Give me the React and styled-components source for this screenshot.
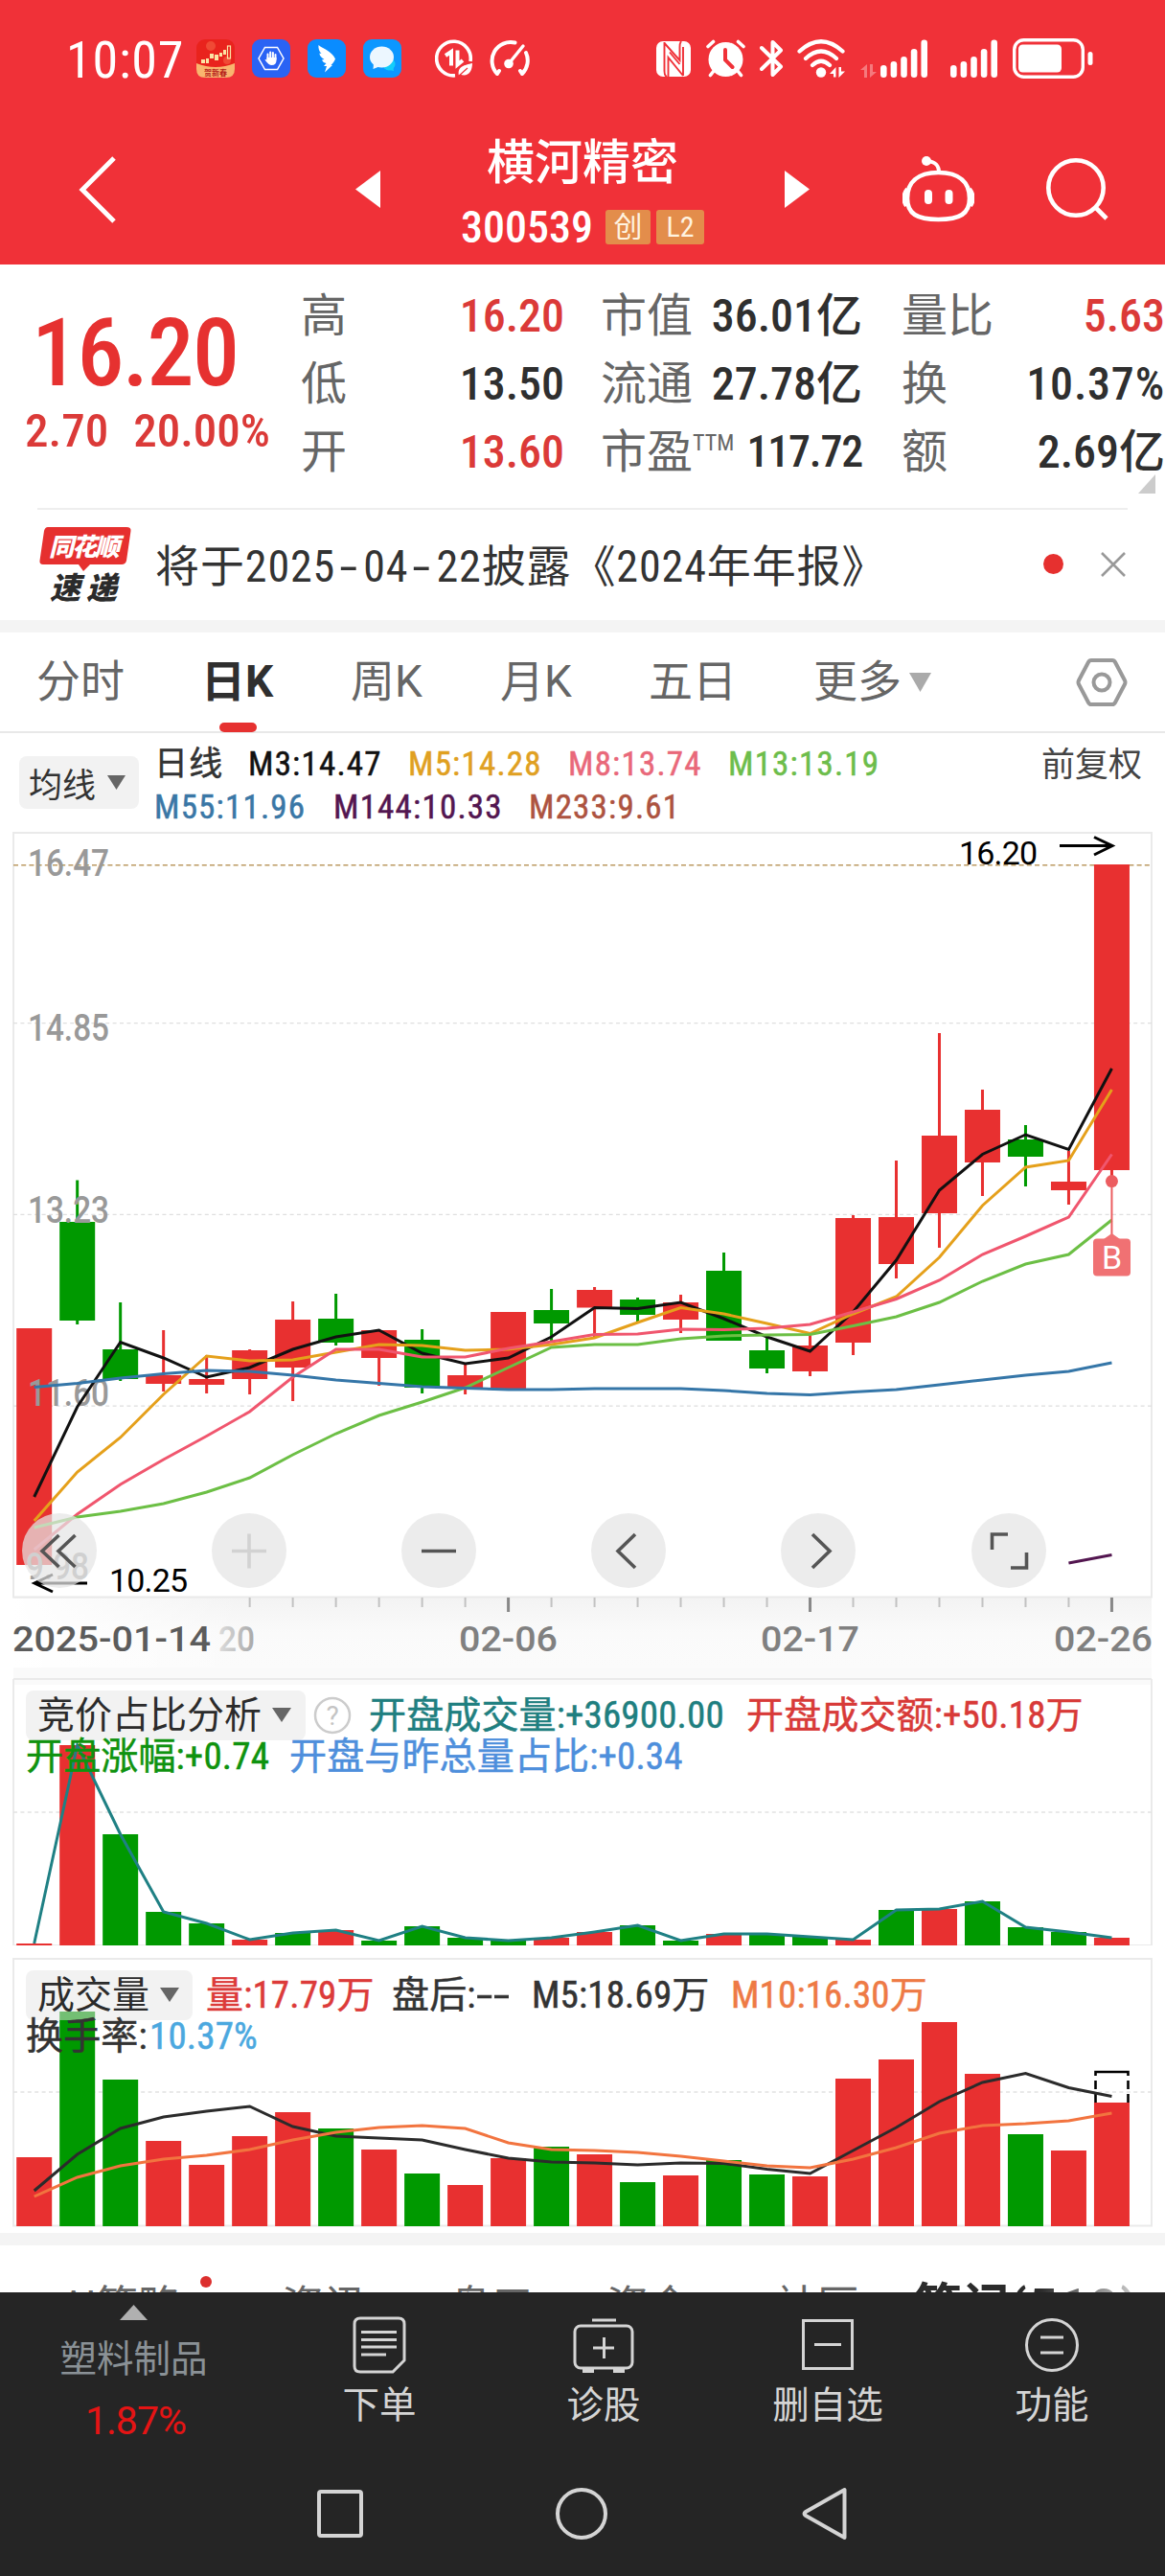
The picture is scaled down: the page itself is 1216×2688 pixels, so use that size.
import React from "react";
import styled, { createGlobalStyle } from "styled-components";

const RED = "#e83030";
const GREEN = "#009900";

const STEP = 44.99;
const FIRST = 35.7;
const BAR = 37;
const cx = (i) => FIRST + STEP * i;

// up, body top, body bottom, wick top, wick bottom
const candles = [
  [1, 526, 773, 526, 773],
  [0, 415, 518, 371.5, 522],
  [0, 548, 579, 499, 581],
  [1, 575, 584, 528, 592],
  [1, 579, 585, 554, 594],
  [1, 549, 579, 548, 595],
  [1, 517, 567, 498, 602],
  [0, 516, 541, 490, 544],
  [1, 528, 557, 528, 586],
  [0, 538, 588, 527, 594],
  [1, 575, 589, 563, 595],
  [1, 509, 590, 509, 590],
  [0, 507, 521, 485, 540],
  [1, 486, 504.5, 483, 536],
  [0, 496, 512, 494, 520],
  [1, 499, 517, 491, 531],
  [0, 466, 539, 447, 539],
  [0, 549, 568, 535, 573],
  [1, 544, 571, 533, 576],
  [1, 411, 541, 408, 554],
  [1, 410, 459, 351, 474],
  [1, 325, 406, 218, 442],
  [1, 298, 353, 277, 388],
  [0, 329, 347, 314, 378],
  [1, 373, 382, 341, 397],
  [1, 42, 361, 42, 371],
];

const averages = [
  {
    color: "#111",
    values: [
      702, 608, 540.5, 557, 577, 567, 548, 535, 528, 552, 563, 557, 535, 504.5,
      505.5, 499, 516, 535, 550, 509, 455, 382, 344.5, 324, 339.5, 255,
    ],
  },
  {
    color: "#e5a01b",
    values: [
      727, 676, 640, 595, 555, 560, 559, 551, 543, 544, 549, 548, 543, 536, 520,
      504.5, 511, 521, 531.5, 511, 493, 452, 398, 358, 351, 277,
    ],
  },
  {
    color: "#f0566e",
    values: [
      757, 720, 689, 663, 638.5, 613, 577, 548, 548, 556, 556, 547, 540, 532.5,
      532, 527, 527.5, 526, 522, 509, 495.5, 476, 449, 430, 410, 344.5,
    ],
  },
  {
    color: "#6cbf45",
    values: [
      734, 723, 717, 709, 697, 682, 658, 636, 617, 603, 588, 567, 546, 543, 543,
      537, 534, 533, 532.5, 523.5, 514, 499, 477, 459, 449, 413,
    ],
  },
  {
    color: "#3576a8",
    values: [
      587.5, 583.5, 578, 573.5, 570, 571, 575, 580, 583.5, 587, 588.5, 590, 590,
      589, 589, 589, 591, 594, 595.5, 592.5, 590, 585, 580, 575, 571, 562,
    ],
  },
];

const auction = {
  up: [0, 1, 5, 7, 12, 13, 16, 19, 21, 25],
  tops: [
    288, 81, 174, 255, 267, 284, 277, 274, 285, 270, 282, 285, 282, 276, 269,
    285, 278, 278, 281, 284, 253, 252, 244, 271, 276, 282,
  ],
};

const volume = {
  up: [0, 3, 4, 5, 6, 8, 10, 11, 13, 15, 18, 19, 20, 21, 22, 24, 25],
  tops: [
    221, 69, 140, 204, 229, 199, 174, 191, 213, 238, 250, 222, 210, 218, 247,
    240, 224, 239, 241, 139, 119, 80, 134, 197, 214, 164,
  ],
  m5: [
    256, 218, 191, 179, 173, 168, 189, 199, 201, 203, 213, 222, 226, 227, 229,
    227, 227.5, 233.5, 238, 214, 190, 163, 143, 133.5, 148.5, 157.5,
  ],
  m10: [
    262, 242, 230, 223, 219, 213, 203, 195, 190, 188, 191, 206, 213, 214, 216,
    220, 225, 230, 232, 223, 211, 196, 188, 186, 183, 175,
  ],
};

const toPoints = (values) => values.map((v, i) => `${cx(i)},${v}`).join(" ");

const Bars = ({ up, tops, bottom }) =>
  tops.map((top, i) => (
    <rect
      key={i}
      x={cx(i) - BAR / 2}
      y={top}
      width={BAR}
      height={bottom - top}
      fill={up.includes(i) ? RED : GREEN}
    />
  ));

const PriceChart = () => (
  <ChartSvg viewBox="0 0 1216 880" height="880">
    <defs>
      <linearGradient id="axisFade" x1="0" y1="0" x2="0" y2="1">
        <stop offset="0" stopColor="#f3f3f3" />
        <stop offset="0.5" stopColor="#fafafa" />
        <stop offset="1" stopColor="#fbfbfb" />
      </linearGradient>
      <linearGradient id="labelFade" x1="0" y1="0" x2="1" y2="0">
        <stop offset="0" stopColor="#dcdcdc" />
        <stop offset="1" stopColor="#a8a8a8" />
      </linearGradient>
      <linearGradient id="leftFade" x1="0" y1="0" x2="1" y2="0">
        <stop offset="0" stopColor="#fff" />
        <stop offset="1" stopColor="#fff" stopOpacity="0" />
      </linearGradient>
    </defs>
    <rect x="14" y="807" width="1188" height="73" fill="url(#axisFade)" />
    <rect x="14" y="808" width="240" height="72" fill="url(#leftFade)" />
    <rect x="14" y="9" width="1188" height="797.5" fill="#fff" stroke="#eaeaea" strokeWidth="2" />
    <g stroke="#dedede" strokeWidth="1.2" strokeDasharray="4 3.4">
      <path d="M14 207.6H1202M14 407.4H1202M14 607.2H1202" />
    </g>
    <path d="M14 42.8H1202" stroke="#bb9a62" strokeWidth="1.6" strokeDasharray="5 3.2" />

    {candles.map(([isUp, top, bottom, high, low], i) => (
      <g key={i} fill={isUp ? RED : GREEN}>
        <rect x={cx(i) - 1.5} y={high} width="3" height={low - high} />
        <rect x={cx(i) - BAR / 2} y={top} width={BAR} height={bottom - top} />
      </g>
    ))}

    <AxisLabel>
      <text x="29" y="54" textLength="85" lengthAdjust="spacingAndGlyphs">16.47</text>
      <text x="29" y="226" textLength="85" lengthAdjust="spacingAndGlyphs">14.85</text>
      <text x="29" y="416" textLength="85" lengthAdjust="spacingAndGlyphs">13.23</text>
      <text x="29" y="607" textLength="85" lengthAdjust="spacingAndGlyphs">11.60</text>
      <text x="27" y="788" textLength="66" lengthAdjust="spacingAndGlyphs">9.98</text>
    </AxisLabel>

    {averages.map((line) => (
      <polyline
        key={line.color}
        points={toPoints(line.values)}
        fill="none"
        stroke={line.color}
        strokeWidth="3"
      />
    ))}
    <path d={`M${cx(24)} 771L${cx(25)} 762.5`} stroke="#531650" strokeWidth="3" />

    <Extreme>
      <text x="1001" y="41.5" textLength="82">16.20</text>
      <text x="114" y="801" textLength="82">10.25</text>
      <path d="M1106 22.6H1160M1142 13.5L1161 22.6L1142 32" />
      <path d="M91 792H37M55 783L36 792L55 801" />
    </Extreme>

    <g fill="#ec5d60">
      <circle cx={cx(25)} cy="372.6" r="6.5" />
      <rect x={cx(25) - 1} y="372" width="2" height="56" />
      <path d="M1152 433L1160.5 427L1169 433Z" fill="#f07173" />
      <rect x="1141" y="432.5" width="39" height="39" rx="4" fill="#f07173" />
    </g>
    <BuyMark x="1160.5" y="463.5">B</BuyMark>

    {candles.map((_, i) =>
      i < 5 ? null : (
        <rect
          key={i}
          x={cx(i) - (i % 7 === 4 ? 1.5 : 1)}
          y="807"
          width={i % 7 === 4 ? 3 : 2}
          height={i % 7 === 4 ? 15 : 10}
          fill={i % 7 === 4 ? "#888" : "#c2c2c2"}
        />
      )
    )}
    <DateLabel>
      <text x="13" y="863" textLength="207" lengthAdjust="spacingAndGlyphs" fill="#5c5c5c">2025-01-14</text>
      <text x="228" y="863" textLength="38" lengthAdjust="spacingAndGlyphs" fill="url(#labelFade)">20</text>
      <text x="479" y="863" textLength="103" lengthAdjust="spacingAndGlyphs">02-06</text>
      <text x="794" y="863" textLength="103" lengthAdjust="spacingAndGlyphs">02-17</text>
      <text x="1100" y="863" textLength="103" lengthAdjust="spacingAndGlyphs">02-26</text>
    </DateLabel>
  </ChartSvg>
);

const AuctionChart = () => (
  <ChartSvg viewBox="0 0 1216 290" height="290">
    <rect x="14" y="0" width="1188" height="18" fill="#fafafa" />
    <path d="M14 12V290M1202 12V290M14 12H1202M14 290H1202" stroke="#eaeaea" strokeWidth="2" />
    <path d="M14 151H1202" stroke="#e2e2e2" strokeWidth="1.5" strokeDasharray="4 3.4" />
    <Bars up={auction.up} tops={auction.tops} bottom={290} />
    <polyline points={toPoints(auction.tops)} fill="none" stroke="#1f8084" strokeWidth="3" />
  </ChartSvg>
);

const VolumeChart = () => (
  <ChartSvg viewBox="0 0 1216 300" height="300">
    <rect x="14" y="14" width="1188" height="278.5" fill="none" stroke="#eaeaea" strokeWidth="2" />
    <path d="M14 153H1202" stroke="#e2e2e2" strokeWidth="1.5" strokeDasharray="4 3.4" />
    <Bars up={volume.up} tops={volume.tops} bottom={293} />
    <path d="M1143.5 136V132H1177.5V136M1143.5 141V150M1143.5 155V164M1177.5 141V150M1177.5 155V164" fill="none" stroke="#000" strokeWidth="2.6" />
    <polyline points={toPoints(volume.m5)} fill="none" stroke="#2b2b2b" strokeWidth="3" />
    <polyline points={toPoints(volume.m10)} fill="none" stroke="#f2743f" strokeWidth="3" />
  </ChartSvg>
);

const StatusIcons = () => (
  <StatusGroup>
    <svg width="40" height="40" viewBox="0 0 40 40">
      <rect width="40" height="40" rx="9" fill="#e9231d" />
      <circle cx="15" cy="7" r="5" fill="#f04a35" />
      <circle cx="32" cy="22" r="4" fill="#f04a35" />
      <path d="M0 25Q20 33 40 25V31Q40 40 31 40H9Q0 40 0 31Z" fill="#f9b56f" />
      <g fill="#fbe3a4">
        <rect x="5" y="21" width="4" height="4" />
        <rect x="10" y="20" width="3" height="5" />
        <rect x="14" y="15" width="4" height="5" />
        <rect x="19" y="16" width="4" height="6" />
        <rect x="24" y="14" width="3" height="4" />
        <rect x="28" y="11" width="3" height="5" />
      </g>
      <rect x="32.5" y="7" width="3" height="13" fill="none" stroke="#fbe3a4" strokeWidth="1.2" />
      <AppCaption x="20" y="38">贺新春</AppCaption>
    </svg>
    <svg width="40" height="40" viewBox="0 0 40 40">
      <rect width="40" height="40" rx="9" fill="#2a63f4" />
      <path d="M13.5 8.5H26.5L33 20L26.5 31.5H13.5L7 20Z" fill="none" stroke="#fff" strokeWidth="1.5" />
      <path
        d="M16.5 21V15.5M19.2 20V13.5M21.9 20V14M24.5 21V16"
        stroke="#fff"
        strokeWidth="2"
        strokeLinecap="round"
      />
      <path d="M15.5 19H25.5V22Q25.5 27 20.5 27Q17.5 27 13.5 21.5Q14 20.5 15.5 21.5Z" fill="#fff" />
    </svg>
    <svg width="40" height="40" viewBox="0 0 40 40">
      <rect width="40" height="40" rx="9" fill="#0a8cff" />
      <path
        d="M11.5 6C16 10 25 12 29 20.5C28 23 26.500 25 24.500 27H26L18 34.500L20 28H17L19.500 25C17 24.500 15.500 23 15 21.500L17.500 21C13.500 18.500 12.500 16.500 12.500 14.500L14.500 15C12 12.500 11 9 11.500 6Z"
        fill="#fff"
      />
    </svg>
    <svg width="40" height="40" viewBox="0 0 40 40">
      <rect width="40" height="40" rx="9" fill="#0c97ff" />
      <circle cx="27" cy="26" r="6.500" fill="#12cdfb" />
      <path d="M31 28L32 33L25 31.500Z" fill="#12cdfb" />
      <ellipse cx="19.500" cy="18.500" rx="12.500" ry="11" fill="#ecf7ff" />
      <path d="M11 25L10.500 31L18 28Z" fill="#ecf7ff" />
    </svg>
    <DataSaver width="40" height="40" viewBox="0 0 40 40" fill="none" stroke="#fff">
      <path d="M37 23A17.800 17.800 0 1 0 21 37.800" strokeWidth="3.600" />
      <path d="M17 27.500V13L11 17M23.500 11.500V26.500L29 22" strokeWidth="4" />
      <path d="M25 38C23 28 31 27 39 25C39 34 34 40 26 36.500Z" fill="#fff" stroke="none" />
      <path d="M24 39L34 30" stroke="#f03138" strokeWidth="1.200" />
    </DataSaver>
    <Gauge width="45" height="40" viewBox="0 0 45 40" fill="none" stroke="#fff" strokeLinecap="round">
      <path d="M10 36A19.500 19.500 0 0 1 28.500 3.500M40 14A19.500 19.500 0 0 1 36 36M10 36L12 33M36 36L34 33" strokeWidth="4" />
      <path d="M22 25.500L37 7" strokeWidth="3.400" />
      <circle cx="22" cy="25.500" r="4.800" fill="#fff" stroke="none" />
    </Gauge>
  </StatusGroup>
);

const signal = [27, 23, 18, 10, 0.5];

const Signal = () => (
  <svg width="50" height="40" viewBox="0 0 50 40">
    {signal.map((y, i) => (
      <rect key={y} x={i * 10.6} y={y} width="6.600" height={40 - y} rx="3.300" fill="#fff" />
    ))}
  </svg>
);

const SystemIcons = () => (
  <SystemGroup>
    <svg width="36" height="37" viewBox="0 0 36 37">
      <rect width="36" height="37" rx="7" fill="#fff" />
      <path
        d="M8.500 1V31Q8.500 36 11 37M8.500 2L24.500 20V6Q24.500 2 26 0M12.500 37V17L28 36M14 11.500L24.500 24M28 36V6"
        fill="none"
        stroke="#f03138"
        strokeWidth="1.900"
      />
    </svg>
    <Alarm width="41" height="40" viewBox="0 0 41 40" fill="none" stroke="#fff" strokeLinecap="round">
      <circle cx="20.500" cy="21" r="18" fill="#fff" stroke="none" />
      <path d="M2 7.500L7.500 2.500M33.500 2.500L39 7.500M8 33L4.500 37.500M33 33L36.500 37.500" strokeWidth="3.600" />
      <path d="M20 11V21.500L27.500 29" stroke="#f03138" strokeWidth="4" />
    </Alarm>
    <Bluetooth width="25" height="40" viewBox="0 0 25 40" fill="none" stroke="#fff">
      <path d="M2 9L22 28.500L13.500 37V3L22 11.500L2 31" strokeWidth="4" strokeLinejoin="round" strokeLinecap="round" />
    </Bluetooth>
    <Wifi width="51" height="40" viewBox="0 0 51 40" fill="none" stroke="#fff" strokeLinecap="round">
      <path d="M2.500 12.500Q25 -8 47.500 12.500M9 20Q25 5 41 20M16 27Q25 18.500 34 27" strokeWidth="4.200" />
      <circle cx="25" cy="34.500" r="5.200" fill="#fff" stroke="none" />
      <path d="M34 36L40.500 29V39.500H38V36ZM50 33.500L43.500 40V29H46V33.500Z" fill="#fff" stroke="none" />
    </Wifi>
    <MiniArrows width="17" height="14" viewBox="0 0 17 14">
      <path d="M0 6L7 0V14H4V6ZM17 8L10 14V0H13V8Z" fill="#fff" />
    </MiniArrows>
    <Signal />
    <SecondSignal>
      <Signal />
    </SecondSignal>
    <svg width="85" height="42" viewBox="0 0 85 42">
      <rect x="1.700" y="1.700" width="71.600" height="38.600" rx="10" fill="none" stroke="#fff" strokeWidth="3.400" />
      <rect x="6" y="6.500" width="45" height="29" rx="4.500" fill="#fff" />
      <rect x="78.500" y="14" width="5" height="14" rx="2.500" fill="#fff" />
    </svg>
  </SystemGroup>
);

const quotes = [
  { label: "高", value: "16.20", up: true },
  { label: "市值", value: "36.01亿" },
  { label: "量比", value: "5.63", up: true },
  { label: "低", value: "13.50" },
  { label: "流通", value: "27.78亿" },
  { label: "换", value: "10.37%", wide: true },
  { label: "开", value: "13.60", up: true },
  { label: "市盈", sup: "TTM", value: "117.72", tight: true },
  { label: "额", value: "2.69亿" },
];

const periods = [
  { name: "分时", width: 172 },
  { name: "日K", width: 156, active: true },
  { name: "周K", width: 156 },
  { name: "月K", width: 155 },
  { name: "五日", width: 172 },
  { name: "更多", width: 100 },
];

const sections = [
  { name: "AI策略", width: 230 },
  { name: "资讯", width: 175 },
  { name: "盘口", width: 164 },
  { name: "资金", width: 176 },
  { name: "社区", width: 145 },
];

const Down = ({ size = 18, height = 15, color = "#666" }) => (
  <svg width={size} height={height} viewBox="0 0 18 15" preserveAspectRatio="none">
    <path d="M0 0H18L9 15Z" fill={color} />
  </svg>
);

const Tool = ({ children, $muted }) => (
  <ToolButton $muted={$muted}>
    <svg width="78" height="78" viewBox="0 0 78 78">
      {children}
    </svg>
  </ToolButton>
);

const App = () => (
  <Page>
    <GlobalStyle />
    <StatusBar>
      <Clock>10:07</Clock>
      <StatusIcons />
      <SystemIcons />
    </StatusBar>

    <Header>
      <Back width="42" height="72" viewBox="0 0 42 72">
        <path d="M38 3L5 36L38 69" fill="none" stroke="#fff" strokeWidth="5" />
      </Back>
      <svg width="26" height="39" viewBox="0 0 26 39">
        <path d="M26 0V39L0 19.500Z" fill="#fff" />
      </svg>
      <TitleBlock>
        <StockName>横河精密</StockName>
        <CodeRow>
          <StockCode>300539</StockCode>
          <Badge $width={47}>创</Badge>
          <Badge $width={50}>L2</Badge>
        </CodeRow>
      </TitleBlock>
      <svg width="26" height="39" viewBox="0 0 26 39">
        <path d="M0 0V39L26 19.500Z" fill="#fff" />
      </svg>
      <Robot width="75" height="70" viewBox="0 0 75 70" fill="none" stroke="#fff">
        <path d="M37.500 17C60 17 70 28 70 44C70 60 60 66 37.500 66C15 66 5 60 5 44C5 28 15 17 37.500 17Z" strokeWidth="4.600" />
        <path d="M38 17C38 9 34 6 26 5" strokeWidth="4" />
        <circle cx="25" cy="5" r="5" fill="#fff" stroke="none" />
        <path d="M5 34Q-2 43 4 52M70 34Q77 43 71 52" strokeWidth="4" />
        <path d="M27 39V46M48.500 39V46" strokeWidth="8" strokeLinecap="round" />
      </Robot>
      <svg width="66" height="66" viewBox="0 0 66 66" fill="none" stroke="#fff" strokeWidth="4.600">
        <circle cx="31" cy="31" r="28.700" />
        <path d="M52 52L63 63" />
      </svg>
    </Header>

    <QuotePanel>
      <PriceBlock>
        <Price>16.20</Price>
        <ChangeRow>
          <span>2.70</span>
          <span>20.00%</span>
        </ChangeRow>
      </PriceBlock>
      <QuoteGrid>
        {quotes.map((q) => (
          <QuoteCell key={q.label}>
            <QuoteLabel>
              {q.label}
              {q.sup && <sup>{q.sup}</sup>}
            </QuoteLabel>
            <QuoteValue $up={q.up} $tight={q.tight} $wide={q.wide}>
              {q.value}
            </QuoteValue>
          </QuoteCell>
        ))}
      </QuoteGrid>
      <Corner width="18" height="20" viewBox="0 0 18 20">
        <path d="M18 0V20H0Z" fill="#ccc" />
      </Corner>
    </QuotePanel>

    <News>
      <svg width="96" height="80" viewBox="0 0 96 80">
        <path d="M9 1H91Q96 1 95.500 5L91 36Q90 40 86 40H53L46 47L41 40H4Q0 40 0.500 36L5 5Q6 1 9 1Z" fill="#e6302f" />
        <LogoText x="47" y="31" fill="#fff" fontSize="26" textLength="74">同花顺</LogoText>
        <LogoText x="46" y="76" fill="#2b2b2b" fontSize="32" textLength="70">速递</LogoText>
      </svg>
      <NewsText>
        将于2025<Dash>-</Dash>04<Dash>-</Dash>22披露《2024年年报》
      </NewsText>
      <NewsDot />
      <svg width="26" height="26" viewBox="0 0 26 26">
        <path d="M1 1L25 25M25 1L1 25" stroke="#999" strokeWidth="2.600" />
      </svg>
    </News>
    <Band />

    <PeriodTabs>
      {periods.map((p) => (
        <Period key={p.name} $width={p.width} $active={p.active}>
          {p.name}
        </Period>
      ))}
      <Down size={23} height={20} color="#aaa" />
      <Settings width="54" height="52" viewBox="0 0 54 52" fill="none" stroke="#999" strokeWidth="4">
        <path d="M16 3H38Q40 3 41 5L51 24Q52 26 51 28L41 47Q40 49 38 49H16Q14 49 13 47L3 28Q2 26 3 24L13 5Q14 3 16 3Z" />
        <circle cx="27" cy="26" r="8.500" />
      </Settings>
    </PeriodTabs>

    <AverageBar>
      <AverageButton>
        均线
        <Down size={19} height={15} />
      </AverageButton>
      <AverageLegend>
        <LegendRow>
          <Average $width={98} $color="#333">日线</Average>
          <Average $width={167} $color="#111">M3:14.47</Average>
          <Average $width={167} $color="#e0a021">M5:14.28</Average>
          <Average $width={167} $color="#e9687a">M8:13.74</Average>
          <Average $width={160} $color="#6dbd4b">M13:13.19</Average>
        </LegendRow>
        <LegendRow>
          <Average $width={187} $color="#3a77a6">M55:11.96</Average>
          <Average $width={204} $color="#531650">M144:10.33</Average>
          <Average $width={170} $color="#ad5340">M233:9.61</Average>
        </LegendRow>
      </AverageLegend>
      <Adjust>前复权</Adjust>
    </AverageBar>

    <Stack>
      <PriceChart />
      <ChartTools>
        <Tool>
          <path d="M38.500 23L21 39.500L38.500 56M55.500 23L38 39.500L55.500 56" />
        </Tool>
        <Tool $muted>
          <path d="M21 39.500H57M39 21.500V57.500" />
        </Tool>
        <Tool>
          <path d="M21 39.500H57" />
        </Tool>
        <Tool>
          <path d="M46 22L28 39.500L46 57" />
        </Tool>
        <Tool>
          <path d="M33 22L51 39.500L33 57" />
        </Tool>
        <Tool>
          <path d="M21.500 38V22H38M57.500 41V57H41" />
        </Tool>
      </ChartTools>
    </Stack>

    <Stack>
      <AuctionChart />
      <PanelLegend $top={24}>
        <IndicatorRow>
          <IndicatorButton $width={292}>
            竞价占比分析
            <Down size={20} height={15} />
          </IndicatorButton>
          <Help width="40" height="40" viewBox="0 0 40 40">
            <circle cx="20" cy="20" r="18" fill="none" stroke="#ccc" strokeWidth="2.500" />
            <HelpMark x="20" y="30">?</HelpMark>
          </Help>
          <Indicator $width={394} $color="#1f7f80">开盘成交量:+36900.00</Indicator>
          <Indicator $width={360} $color="#d83a38">开盘成交额:+50.18万</Indicator>
        </IndicatorRow>
        <SecondRow>
          <Indicator $width={275} $color="#0f930f">开盘涨幅:+0.74</Indicator>
          <Indicator $width={420} $color="#4e8fdc">开盘与昨总量占比:+0.34</Indicator>
        </SecondRow>
      </PanelLegend>
    </Stack>

    <Stack>
      <VolumeChart />
      <PanelLegend $top={26}>
        <IndicatorRow>
          <IndicatorButton $width={174}>
            成交量
            <Down size={20} height={15} />
          </IndicatorButton>
          <VolumeValues>
            <Indicator $width={194} $color="#dc3b3a">量:17.79万</Indicator>
            <Indicator $width={146} $color="#333">
              盘后:<Dashes>--</Dashes>
            </Indicator>
            <Indicator $width={208} $color="#333">M5:18.69万</Indicator>
            <Indicator $width={220} $color="#ee7a45">M10:16.30万</Indicator>
          </VolumeValues>
        </IndicatorRow>
        <SecondRow>
          <Indicator $width={129} $color="#333">换手率:</Indicator>
          <Indicator $width={130} $color="#4ba8df">10.37%</Indicator>
        </SecondRow>
      </PanelLegend>
    </Stack>
    <Band />

    <SectionTabs>
      {sections.map((s) => (
        <Section key={s.name} $width={s.width}>
          {s.name}
        </Section>
      ))}
      <ActiveSection>
        笔记<span>(518)</span>
      </ActiveSection>
      <SectionDot />
      <SectionFade />
    </SectionTabs>

    <Footer>
      <Industry>
        <svg width="29" height="16" viewBox="0 0 29 16">
          <path d="M14.500 0L29 16H0Z" fill="#b0b0b0" />
        </svg>
        <IndustryName>塑料制品</IndustryName>
        <IndustryRate>1.87%</IndustryRate>
      </Industry>
      <Action>
        <ActionIcon viewBox="0 0 64 60">
          <path d="M12 2H52Q58 2 58 8V46L46 58H12Q6 58 6 52V8Q6 2 12 2Z" />
          <path d="M13 16.500H50M13 24.500H50M13 32H50M13 40H39" />
        </ActionIcon>
        下单
      </Action>
      <Action>
        <ActionIcon viewBox="0 0 64 60">
          <rect x="2" y="10" width="60" height="44" rx="6" />
          <path d="M20 4H45M32.500 22V44M21 33H43" />
          <path d="M10 57H22M42 57H54" strokeWidth="4" />
        </ActionIcon>
        诊股
      </Action>
      <Action>
        <ActionIcon viewBox="0 0 64 60">
          <rect x="6.500" y="4.500" width="51" height="50" />
          <path d="M18 29.500H46" />
        </ActionIcon>
        删自选
      </Action>
      <Action>
        <ActionIcon viewBox="0 0 64 60">
          <circle cx="32" cy="30" r="26.500" />
          <path d="M20 22H44M20 38H44" />
        </ActionIcon>
        功能
      </Action>
    </Footer>
    <SystemNav>
      <svg width="48" height="50" viewBox="0 0 48 50">
        <rect x="2" y="2" width="44" height="46" rx="2" />
      </svg>
      <svg width="56" height="56" viewBox="0 0 56 56">
        <circle cx="28" cy="28" r="25" />
      </svg>
      <svg width="48" height="56" viewBox="0 0 48 56">
        <path d="M44.500 3V53L4 30Q1 28 4 26Z" strokeLinejoin="round" />
      </svg>
    </SystemNav>
  </Page>
);

const GlobalStyle = createGlobalStyle`
  body {
    margin: 0;
    background: #fff;
    font-family: "Roboto Condensed", "Noto Sans CJK SC", sans-serif;
  }
  svg {
    display: block;
    flex: none;
  }
`;

const Page = styled.div`
  width: 1216px;
  height: 2688px;
  overflow: hidden;
  white-space: nowrap;
`;

const StatusBar = styled.div`
  display: flex;
  align-items: center;
  height: 122px;
  background: #f03138;
`;

const Clock = styled.div`
  width: 136px;
  margin-left: 69px;
  padding-top: 2px;
  color: #fff;
  font-size: 54px;
  letter-spacing: 0.8px;
`;

const StatusGroup = styled.div`
  display: flex;
  align-items: center;
  gap: 18px;
  width: 480px;
`;

const AppCaption = styled.text`
  fill: #b5201a;
  font-size: 8px;
  font-weight: 700;
  text-anchor: middle;
`;

const DataSaver = styled.svg`
  margin-left: 17px;
`;

const Gauge = styled.svg`
  margin-left: -3px;
`;

const SystemGroup = styled.div`
  display: flex;
  align-items: center;
`;

const Alarm = styled.svg`
  margin-left: 16px;
`;

const Bluetooth = styled.svg`
  margin-left: 15px;
`;

const Wifi = styled.svg`
  margin-left: 14px;
`;

const MiniArrows = styled.svg`
  align-self: flex-end;
  margin: 0 4px 1px 15px;
  opacity: 0.35;
`;

const SecondSignal = styled.div`
  margin: 0 15px 0 23px;
`;

const Header = styled.div`
  display: flex;
  align-items: center;
  box-sizing: border-box;
  height: 154px;
  padding: 0 0 3px 81px;
  background: #f03138;
`;

const Back = styled.svg`
  margin-right: 248px;
`;

const TitleBlock = styled.div`
  display: flex;
  flex-direction: column;
  align-items: center;
  gap: 21px;
  width: 422px;
  padding-top: 2px;
  color: #fff;
`;

const StockName = styled.div`
  font-size: 50px;
  font-weight: 500;
  line-height: 56px;
`;

const CodeRow = styled.div`
  display: flex;
  align-items: center;
  height: 36px;
`;

const StockCode = styled.div`
  width: 151px;
  font-size: 46px;
  font-weight: 500;
  line-height: 36px;
`;

const Badge = styled.div`
  width: ${(p) => p.$width}px;
  height: 36px;
  margin-right: 6px;
  border-radius: 3px;
  background: #e38d4b;
  color: #fff3e0;
  font-size: 30px;
  line-height: 36px;
  text-align: center;
  &:last-child {
    margin-right: 0;
  }
`;

const Robot = styled.svg`
  margin: 0 75px 0 97px;
`;

const QuotePanel = styled.div`
  position: relative;
  display: flex;
  box-sizing: border-box;
  height: 254px;
  padding-top: 18px;
`;

const PriceBlock = styled.div`
  width: 314px;
  color: #db3a38;
`;

const Price = styled.div`
  margin: 18px 0 0 33px;
  color: #e63130;
  font-size: 98px;
  font-weight: 500;
  line-height: 114px;
  letter-spacing: -1.6px;
`;

const ChangeRow = styled.div`
  display: flex;
  gap: 26px;
  margin: 0 0 0 26px;
  font-size: 49px;
  font-weight: 500;
  line-height: 48px;
`;

const QuoteGrid = styled.div`
  display: grid;
  grid-template-columns: 275px 273px 276px;
  grid-auto-rows: 71px;
  column-gap: 38px;
`;

const QuoteCell = styled.div`
  display: flex;
  align-items: center;
  justify-content: space-between;
  &:nth-child(3n) {
    margin: 0 -2px 0 3px;
  }
`;

const QuoteLabel = styled.div`
  color: #666;
  font-size: 48px;
  line-height: 71px;
  sup {
    font-size: 24px;
    line-height: 1;
    vertical-align: 18px;
  }
`;

const QuoteValue = styled.div`
  color: ${(p) => (p.$up ? "#db3a38" : "#2f2f2f")};
  font-size: ${(p) => (p.$tight ? 46 : 48)}px;
  font-weight: 500;
  line-height: 71px;
  letter-spacing: ${(p) => (p.$tight ? -1.2 : p.$wide ? 0.8 : 0)}px;
`;

const Corner = styled.svg`
  position: absolute;
  right: 10px;
  bottom: 15px;
`;

const News = styled.div`
  display: flex;
  align-items: center;
  box-sizing: border-box;
  height: 117px;
  margin: 0 39px;
  padding: 0 0 2px 2px;
  border-top: 2px solid #eee;
`;

const LogoText = styled.text`
  font-style: italic;
  font-weight: 900;
  text-anchor: middle;
`;

const NewsText = styled.div`
  width: 927px;
  margin: -4px 0 0 25px;
  color: #333;
  font-size: 46px;
  letter-spacing: 0.9px;
`;

const Dash = styled.span`
  display: inline-block;
  width: 29px;
  text-align: center;
  transform: scaleX(1.7);
`;

const NewsDot = styled.div`
  width: 21px;
  height: 21px;
  margin-right: 39px;
  border-radius: 50%;
  background: #e6302f;
`;

const Band = styled.div`
  height: 13px;
  background: #f4f4f4;
`;

const PeriodTabs = styled.div`
  display: flex;
  align-items: center;
  box-sizing: border-box;
  height: 105px;
  padding-left: 38px;
  border-bottom: 2px solid #e8e8e8;
`;

const Period = styled.div`
  position: relative;
  width: ${(p) => p.$width}px;
  color: ${(p) => (p.$active ? "#2f2f2f" : "#666")};
  font-family: Roboto, "Noto Sans CJK SC", sans-serif;
  font-size: 46px;
  font-weight: ${(p) => (p.$active ? 700 : 400)};
  line-height: 107px;
  &::after {
    content: "";
    position: absolute;
    bottom: 1px;
    left: 19px;
    width: 39px;
    height: 10px;
    border-radius: 5px;
    background: ${(p) => (p.$active ? "#e63130" : "transparent")};
  }
`;

const Settings = styled.svg`
  margin-left: 151px;
`;

const AverageBar = styled.div`
  display: flex;
  box-sizing: border-box;
  height: 95px;
  padding: 8px 20px 0;
  font-size: 35px;
`;

const AverageButton = styled.div`
  display: flex;
  align-items: center;
  gap: 12px;
  box-sizing: border-box;
  width: 125px;
  height: 55px;
  margin-top: 16px;
  padding-left: 10px;
  border-radius: 8px;
  background: #f2f2f2;
  color: #333;
`;

const AverageLegend = styled.div`
  width: 926px;
  margin-left: 16px;
`;

const LegendRow = styled.div`
  display: flex;
  height: 45px;
  line-height: 50px;
`;

const Average = styled.div`
  width: ${(p) => p.$width}px;
  color: ${(p) => p.$color};
  letter-spacing: 1.2px;
  -webkit-text-stroke: 0.5px currentColor;
`;

const Adjust = styled.div`
  color: #444;
  line-height: 51px;
`;

const Stack = styled.div`
  display: grid;
  > * {
    grid-area: 1 / 1;
  }
`;

const ChartSvg = styled.svg`
  width: 1216px;
`;

const AxisLabel = styled.g`
  fill: #999;
  font-family: Roboto, sans-serif;
  font-size: 38px;
  font-weight: 500;
`;

const Extreme = styled.g`
  fill: none;
  stroke: #000;
  stroke-width: 3;
  text {
    fill: #000;
    stroke: none;
    font-family: Roboto, sans-serif;
    font-size: 34px;
  }
`;

const BuyMark = styled.text`
  fill: #fff;
  font-family: Roboto, sans-serif;
  font-size: 34px;
  text-anchor: middle;
`;

const DateLabel = styled.g`
  fill: #808080;
  font-family: Roboto, sans-serif;
  font-size: 36px;
  font-weight: 500;
`;

const ChartTools = styled.div`
  display: flex;
  gap: 120.2px;
  align-self: end;
  margin: 0 0 83px 22.7px;
`;

const ToolButton = styled.div`
  width: 78px;
  height: 78px;
  border-radius: 50%;
  background: rgba(228, 228, 228, 0.72);
  fill: none;
  stroke: ${(p) => (p.$muted ? "#d2d2d2" : "#555")};
  stroke-width: 3.6;
`;

const PanelLegend = styled.div`
  padding: ${(p) => p.$top}px 0 0 27px;
  font-size: 39px;
`;

const IndicatorRow = styled.div`
  display: flex;
  align-items: center;
  height: 52px;
  line-height: 40px;
  > * {
    padding-bottom: 1px;
  }
`;

const SecondRow = styled.div`
  display: flex;
  height: 30px;
  line-height: 34px;
`;

const IndicatorButton = styled.div`
  display: flex;
  align-items: center;
  gap: 11px;
  box-sizing: border-box;
  width: ${(p) => p.$width}px;
  height: 52px;
  padding-left: 12px;
  border-radius: 8px;
  background: rgba(229, 229, 229, 0.5);
  color: #2b2b2b;
`;

const Help = styled.svg`
  margin: 0 18px 0 8px;
`;

const HelpMark = styled.text`
  fill: #c4c4c4;
  font-family: Roboto, sans-serif;
  font-size: 28px;
  text-anchor: middle;
`;

const VolumeValues = styled.div`
  display: flex;
  margin-left: 14px;
`;

const Indicator = styled.div`
  width: ${(p) => p.$width}px;
  color: ${(p) => p.$color};
  letter-spacing: 0.15px;
  -webkit-text-stroke: 0.5px currentColor;
`;

const Dashes = styled.span`
  display: inline-block;
  transform: scaleX(1.8);
  transform-origin: left;
`;

const SectionTabs = styled.div`
  position: relative;
  display: flex;
  box-sizing: border-box;
  height: 49px;
  padding: 38px 0 0 64px;
  overflow: hidden;
  font-size: 44px;
  line-height: 52px;
`;

const Section = styled.div`
  width: ${(p) => p.$width}px;
  color: #666;
`;

const ActiveSection = styled.div`
  color: #2b2b2b;
  font-size: 50px;
  font-weight: 700;
  span {
    font-family: Roboto, sans-serif;
    letter-spacing: 3px;
  }
`;

const SectionDot = styled.div`
  position: absolute;
  top: 32px;
  left: 209px;
  width: 12px;
  height: 12px;
  border-radius: 50%;
  background: #dc2f2e;
`;

const SectionFade = styled.div`
  position: absolute;
  top: 0;
  right: 0;
  width: 130px;
  height: 49px;
  background: linear-gradient(90deg, rgba(255, 255, 255, 0), #fff);
`;

const Footer = styled.div`
  display: flex;
  box-sizing: border-box;
  height: 168px;
  background: #252525;
  color: #d4d4d4;
`;

const Industry = styled.div`
  display: flex;
  flex-direction: column;
  align-items: center;
  width: 279px;
  padding-top: 13px;
  font-family: Roboto, "Noto Sans CJK SC", sans-serif;
`;

const IndustryName = styled.div`
  margin-top: 16px;
  color: #8a9196;
  font-size: 38.5px;
  line-height: 50px;
`;

const IndustryRate = styled.div`
  margin: 14px 0 0 4px;
  color: #e51414;
  font-size: 41px;
  line-height: 50px;
  letter-spacing: -1px;
`;

const Action = styled.div`
  display: flex;
  flex-direction: column;
  align-items: center;
  width: 234px;
  padding-top: 25px;
  font-size: 38.5px;
  line-height: 65px;
`;

const ActionIcon = styled.svg`
  width: 64px;
  height: 60px;
  fill: none;
  stroke: #d4d4d4;
  stroke-width: 3;
`;

const SystemNav = styled.div`
  display: flex;
  align-items: center;
  gap: 200px;
  box-sizing: border-box;
  height: 128px;
  padding: 0 0 3px 331px;
  background: #252525;
  fill: none;
  stroke: #d4d4d4;
  stroke-width: 4;
  svg + svg {
    margin-right: 2px;
  }
`;

export default App;
